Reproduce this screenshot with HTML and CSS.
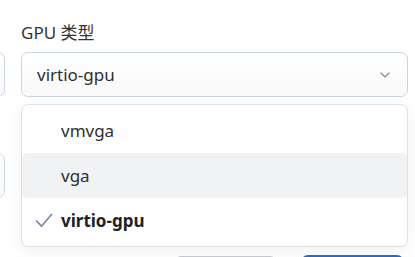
FILE: index.html
```html
<!DOCTYPE html>
<html lang="zh">
<head>
<meta charset="utf-8">
<link rel="stylesheet" href="styles.css">
</head>
<body>
<div class="page">
  <div class="form">
    <div class="col left">
      <div class="field">
        <div class="label">显示</div>
        <div class="select"></div>
      </div>
      <div class="field">
        <div class="label">内存</div>
        <div class="select"></div>
      </div>
    </div>
    <div class="col right">
      <div class="field">
        <div class="label">GPU 类型</div>
        <div class="select">
          <span class="value">virtio-gpu</span>
          <svg class="chev" width="10" height="6" viewBox="0 0 10 6"><path d="M1 1 L5 5 L9 1" fill="none" stroke="#8392a8" stroke-width="1.4" stroke-linecap="round" stroke-linejoin="round"/></svg>
        </div>
      </div>
      <div class="field">
        <div class="label">显存</div>
        <div class="select"></div>
      </div>
    </div>
  </div>
  <div class="actions">
    <div class="btn secondary">取消</div>
    <div class="btn primary">确定</div>
  </div>
  <div class="menu">
    <div class="item"><span class="check"></span><span>vmvga</span></div>
    <div class="item hover"><span class="check"></span><span>vga</span></div>
    <div class="item selected"><span class="check"><svg width="18" height="15" viewBox="0 0 18 15"><path d="M1.5 8 L6.5 13.2 L16.5 1.5" fill="none" stroke="#7a8aa2" stroke-width="1.7" stroke-linecap="round" stroke-linejoin="round"/></svg></span><span>virtio-gpu</span></div>
  </div>
</div>
</body>
</html>
```
FILE: styles.css
```css
html, body {
  margin: 0;
  padding: 0;
  background: #ffffff;
}
body {
  font-family: "Noto Sans", "Noto Sans CJK SC", sans-serif;
  color: #2e2e2e;
  font-size: 17px;
  overflow: hidden;
  width: 415px;
  height: 257px;
}
.page {
  position: relative;
  width: 415px;
  height: 257px;
  overflow: hidden;
}
.form {
  display: flex;
  gap: 16px;
  margin-left: -382px;
  padding-top: 22px;
}
.col {
  display: flex;
  flex-direction: column;
  gap: 26px;
}
.left { width: 387px; }
.right { width: 387px; }
.field {
  display: flex;
  flex-direction: column;
  gap: 8px;
}
.label {
  height: 22px;
  line-height: 22px;
  font-size: 17px;
  color: #333;
}
.select {
  box-sizing: border-box;
  height: 45px;
  border: 1px solid #c9d4e1;
  border-radius: 7px;
  background: linear-gradient(#ffffff, #f9f9fa);
  display: flex;
  align-items: center;
  justify-content: space-between;
  padding: 0 17px 0 15px;
}
.value {
  font-size: 17px;
  color: #2e2e2e;
}
.chev { display: block; }
.actions {
  display: flex;
  justify-content: flex-end;
  gap: 24px;
  padding-right: 11px;
  margin-top: 57px;
}
.btn {
  box-sizing: border-box;
  width: 103px;
  height: 38px;
  border-radius: 7px;
  display: flex;
  align-items: center;
  justify-content: center;
  font-size: 16px;
}
.secondary {
  border: 1px solid #c5ccd6;
  background: #fff;
  margin-top: 1px;
  color: #333;
}
.primary {
  background: #1d6de0;
  color: #fff;
}
.menu {
  position: absolute;
  left: 21px;
  top: 104px;
  width: 387px;
  height: 143px;
  box-sizing: border-box;
  border: 1px solid #dcdfe4;
  border-radius: 7px;
  background: #fff;
  padding: 3px 0;
  box-shadow: 0 4px 18px rgba(0, 0, 0, 0.06);
  display: flex;
  flex-direction: column;
}
.item {
  height: 45px;
  display: flex;
  align-items: center;
  padding-left: 13px;
  font-size: 17px;
  color: #2e2e2e;
  border-radius: 5px;
}
.item.hover {
  background: #f1f2f4;
}
.item.selected {
  font-weight: 700;
  color: #222;
}
.check {
  width: 26px;
  display: flex;
  align-items: center;
}
.check svg { display: block; }
```
